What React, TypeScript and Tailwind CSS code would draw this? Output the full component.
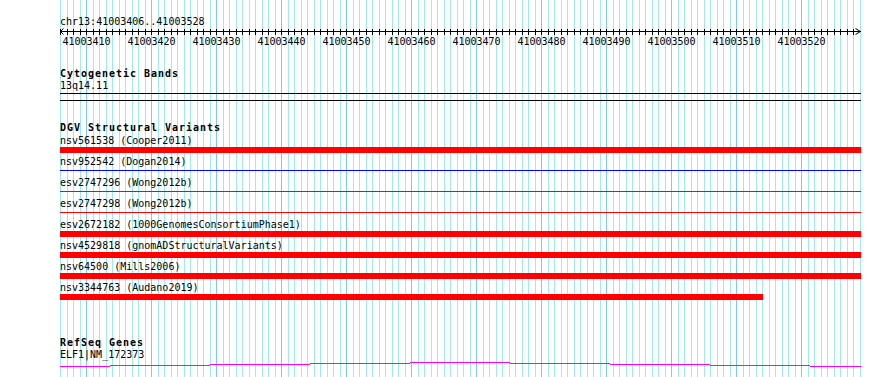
const START = 41003406;
const END = 41003528;
const LEFT = 60;
const BP = 6.5;

const ticks = Array.from({ length: END - START + 2 }, (_, k) => ({
  x: Math.round(LEFT + k * BP),
  pos: START + k,
  major: (START + k) % 10 === 0,
}));

type Variant = { id: string; src: string; kind: 'bar' | 'red' | 'blue'; width?: number };

const variants: Variant[] = [
  { id: 'nsv561538', src: 'Cooper2011', kind: 'bar' },
  { id: 'nsv952542', src: 'Dogan2014', kind: 'blue' },
  { id: 'esv2747296', src: 'Wong2012b', kind: 'red' },
  { id: 'esv2747298', src: 'Wong2012b', kind: 'red' },
  { id: 'esv2672182', src: '1000GenomesConsortiumPhase1', kind: 'bar' },
  { id: 'nsv4529818', src: 'gnomADStructuralVariants', kind: 'bar' },
  { id: 'nsv64500', src: 'Mills2006', kind: 'bar' },
  { id: 'nsv3344763', src: 'Audano2019', kind: 'bar', width: 703 },
];

// intron "hat" of the gene model, [x1, x2, dy]
const hat: [number, number, number][] = [
  [60, 110, 5],
  [110, 210, 4],
  [210, 310, 3],
  [310, 410, 2],
  [410, 510, 1],
  [510, 610, 2],
  [610, 710, 3],
  [710, 810, 4],
  [810, 861, 5],
];

function Grid() {
  return (
    <svg className="absolute inset-0" width={890} height={377} shapeRendering="crispEdges">
      {ticks.map((t) => (
        <rect key={t.pos} x={t.x} y={0} width={1} height={377} fill={t.major ? '#80c6f0' : '#a2e8ee'} />
      ))}
    </svg>
  );
}

function Ruler() {
  return (
    <svg width={810} height={20} className="overflow-visible block">
      <rect x={0} y={3} width={801} height={1} fill="#000" shapeRendering="crispEdges" />
      {ticks.slice(0, -1).map((t) => (
        <rect key={t.pos} x={t.x - LEFT} y={1} width={1} height={6} fill="#000" shapeRendering="crispEdges" />
      ))}
      <polyline points="3.5,0.5 0.5,3.5 3.5,6.5" fill="none" stroke="#000" strokeWidth={1} />
      <polyline points="795.5,0.5 800.5,3.5 795.5,6.5" fill="none" stroke="#000" strokeWidth={1} />
      {ticks
        .filter((t) => t.major)
        .map((t) => (
          <text
            key={t.pos}
            x={t.x - LEFT + 0.5}
            y={16.5}
            textAnchor="middle"
            fontSize={10}
            fontFamily="'DejaVu Sans Mono', monospace"
            fill="#000"
          >
            {t.pos}
          </text>
        ))}
    </svg>
  );
}

function TrackTitle({ children }: { children: string }) {
  return <div className="h-[12px] leading-[12px] font-bold tracking-[0.98px] whitespace-nowrap">{children}</div>;
}

function VariantRow({ v }: { v: Variant }) {
  return (
    <div className="h-[21px]">
      <div className="h-[12px] leading-[12px] whitespace-nowrap">
        {v.id} ({v.src})
      </div>
      {v.kind === 'bar' ? (
        <div className="h-[6px] bg-[#ff0000]" style={{ width: v.width ?? 801 }} />
      ) : (
        <div className="h-[6px] pt-[2px]">
          <div className={v.kind === 'blue' ? 'h-px w-[801px] bg-[#0000ff]' : 'h-px w-[801px] bg-[#ff0000]'} />
        </div>
      )}
    </div>
  );
}

export default function App() {
  return (
    <div className="relative w-[890px] h-[377px] overflow-hidden bg-white text-black text-[10px] font-['DejaVu_Sans_Mono',monospace]">
      <Grid />
      <div className="relative pl-[60px] pt-[16px]">
        <div className="h-[12px] leading-[12px]">chr13:{START}..{END}</div>
        <Ruler />

        <div className="mt-[20px]">
          <TrackTitle>Cytogenetic Bands</TrackTitle>
          <div className="h-[12px] leading-[12px]">13q14.11</div>
          <div className="mt-[1px] h-[8px] w-[801px] border-y border-black" />
        </div>

        <div className="mt-[21px]">
          <TrackTitle>DGV Structural Variants</TrackTitle>
          <div className="pt-[1px]">
            {variants.map((v) => (
              <VariantRow key={v.id} v={v} />
            ))}
          </div>
        </div>

        <div className="mt-[34px]">
          <TrackTitle>RefSeq Genes</TrackTitle>
          <div className="h-[12px] leading-[12px]">ELF1|NM_172373</div>
          <svg width={810} height={8} className="block overflow-visible" shapeRendering="crispEdges">
            {hat.map(([x1, x2, dy]) => (
              <rect key={x1} x={x1 - LEFT} y={dy} width={x2 - x1} height={1} fill="#ff00ff" />
            ))}
          </svg>
        </div>
      </div>
    </div>
  );
}
